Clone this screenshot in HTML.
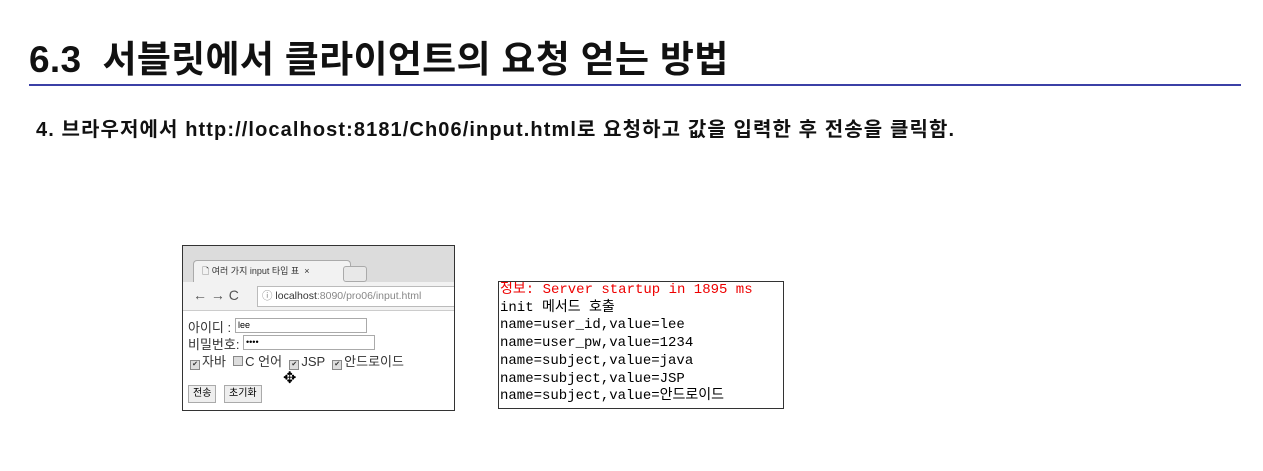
<!DOCTYPE html>
<html><head><meta charset="utf-8"><style>
body{margin:0;width:1263px;height:471px;background:#fff;position:relative;overflow:hidden;font-family:"Liberation Sans","Noto Sans CJK KR",sans-serif;}
.a{position:absolute;}
#t{left:29px;top:29px;font-size:37px;font-weight:bold;color:#111;letter-spacing:0.3px;white-space:nowrap;}
#ln{left:29px;top:84px;width:1212px;height:2px;background:#3b40a6;}
#s{left:36px;top:113px;font-size:20px;font-weight:bold;color:#111;white-space:nowrap;letter-spacing:1.1px;}
#b{left:182px;top:245px;width:271px;height:164px;border:1px solid #333;background:#fff;overflow:hidden;font-size:11px;}
#c{left:498px;top:281px;width:283px;height:126px;border:1px solid #333;background:#fff;font-family:"Liberation Mono","Noto Sans CJK KR",monospace;font-size:14px;line-height:17.7px;padding-left:1px;white-space:nowrap;overflow:hidden;}
.in{position:absolute;border:1px solid #aaa;height:13px;background:#fff;font-size:9px;line-height:13px;padding-left:2px}
.btn{position:absolute;border:1px solid #aaa;background:#eee;font-size:10px;height:16px;line-height:16px;padding:0 4px;}
.cb{display:inline-block;width:8px;height:8px;border:1px solid #888;background:#ddd;font-size:7px;line-height:8px;text-align:center;vertical-align:0;margin-right:2px}
</style></head><body>
<div class="a" id="t">6.3&nbsp; 서블릿에서 클라이언트의 요청 얻는 방법</div>
<div class="a" id="ln"></div>
<div class="a" id="s">4. 브라우저에서 http://localhost:8181/Ch06/input.html로 요청하고 값을 입력한 후 전송을 클릭함.</div>
<div class="a" id="b">
 <div class="a" style="left:0;top:0;width:271px;height:38px;background:#dcdcdc"></div>
 <div class="a" style="left:10px;top:14px;width:148px;height:22px;background:#f2f2f2;border:1px solid #aaa;border-bottom:none;border-radius:4px 4px 0 0;font-size:9px;line-height:20px;padding-left:8px;color:#333">🗋 여러 가지 input 타입 표 &nbsp;×</div>
 <div class="a" style="left:160px;top:20px;width:22px;height:14px;border:1px solid #aaa;border-radius:3px;background:#e8e8e8"></div>
 <div class="a" style="left:0;top:36px;width:271px;height:28px;background:#f2f2f2;border-bottom:1px solid #ccc"></div>
 <div class="a" style="left:10px;top:41px;font-size:14px;color:#555">← → C</div>
 <div class="a" style="left:74px;top:40px;width:200px;height:19px;border:1px solid #bbb;background:#fff;font-size:10.5px;line-height:19px;padding-left:4px;color:#888">ⓘ <b style="color:#333;font-weight:normal">localhost</b>:8090/pro06/input.html</div>
 <div class="a" style="left:5px;top:71px;font-size:13px;color:#333">아이디 :</div>
 <div class="in" style="left:52px;top:72px;width:128px">lee</div>
 <div class="a" style="left:5px;top:88px;font-size:13px;color:#333">비밀번호:</div>
 <div class="in" style="left:60px;top:89px;width:128px">••••</div>
 <div class="a" style="left:7px;top:105px;font-size:13px;color:#333;white-space:nowrap"><span class="cb">✔</span>자바 &nbsp;<span class="cb"></span>C 언어 &nbsp;<span class="cb">✔</span>JSP &nbsp;<span class="cb">✔</span>안드로이드</div>
 <div class="a" style="left:100px;top:122px;font-size:16px">✥</div>
 <div class="btn" style="left:5px;top:139px">전송</div>
 <div class="btn" style="left:41px;top:139px">초기화</div>
</div>
<div class="a" id="c"><span style="color:#e00">정보: Server startup in 1895 ms</span><br>init 메서드 호출<br>name=user_id,value=lee<br>name=user_pw,value=1234<br>name=subject,value=java<br>name=subject,value=JSP<br>name=subject,value=안드로이드</div>
</body></html>
